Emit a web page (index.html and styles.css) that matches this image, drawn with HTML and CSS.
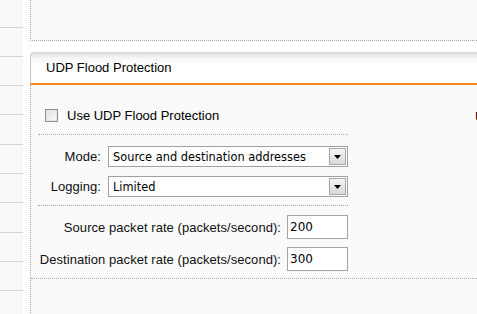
FILE: index.html
```html
<!DOCTYPE html>
<html lang="en">
<head>
  <meta charset="UTF-8">
  <title>UDP Flood Protection</title>
  <link rel="stylesheet" href="styles.css">
</head>
<body>
  <div class="page">
    <ul class="side-nav">
      <li></li><li></li><li></li><li></li><li></li>
      <li></li><li></li><li></li><li></li><li></li>
    </ul>

    <div class="content">
      <div class="box-top"></div>

      <div class="panel">
        <div class="panel-head">UDP Flood Protection</div>
        <div class="panel-body">
          <div class="cols">
            <div class="col-main">
              <label class="check-row">
                <span class="checkbox"></span>
                <span>Use UDP Flood Protection</span>
              </label>

              <div class="group">
                <div class="field">
                  <span class="field-label">Mode:</span>
                  <div class="select">
                    <span class="select-text">Source and destination addresses</span>
                    <span class="select-btn"><svg width="7" height="4" viewBox="0 0 7 4"><path d="M0 0h7L3.5 4z" fill="#000"/></svg></span>
                  </div>
                </div>
                <div class="field">
                  <span class="field-label">Logging:</span>
                  <div class="select">
                    <span class="select-text">Limited</span>
                    <span class="select-btn"><svg width="7" height="4" viewBox="0 0 7 4"><path d="M0 0h7L3.5 4z" fill="#000"/></svg></span>
                  </div>
                </div>
              </div>
            </div>
            <div class="col-side">Use ICMP Flood Protection</div>
          </div>

          <div class="group rates">
            <div class="field">
              <span class="field-label rate-label">Source packet rate (packets/second):</span>
              <input class="text-input" type="text" value="200">
            </div>
            <div class="field">
              <span class="field-label rate-label">Destination packet rate (packets/second):</span>
              <input class="text-input" type="text" value="300">
            </div>
          </div>
        </div>
      </div>
    </div>
  </div>
</body>
</html>
```

FILE: styles.css
```css
/* Reset */
* {
  box-sizing: border-box;
  margin: 0;
  padding: 0;
}

body {
  background-color: #fff;
  font-family: "Liberation Sans", Arial, sans-serif;
  font-size: 13px;
  color: #000;
  overflow: hidden;
}

.page {
  display: flex;
  height: 314px;
}

/* Left navigation strip */
.side-nav {
  list-style: none;
  width: 23px;
  flex: none;
  background-color: #f9f9f9;
}

.side-nav li {
  height: 29.3px;
  border-bottom: 1px solid #d4d4d4;
}

.side-nav li:first-child {
  height: 27.5px;
}

/* Main area */
.content {
  flex: 1;
  margin-left: 7px;
  min-width: 0;
}

.box-top {
  height: 41px;
  background-color: #fafafa;
  border-left: 1px dotted #a8a8a8;
  border-bottom: 1px dotted #a8a8a8;
}

.panel {
  margin-top: 11px;
}

.panel-head {
  height: 33px;
  padding: 7px 0 0 15px;
  border-left: 1px solid #c8c8c8;
  border-top: 1px solid #d8d8d8;
  border-top-left-radius: 4px;
  border-bottom: 2px solid #f28a1a;
  background: linear-gradient(#dedede 0px, #f6f6f6 5px, #fff 12px, #fff 100%);
}

.panel-body {
  background-color: #fafafa;
  border-left: 1px dotted #a8a8a8;
  height: 240px;
  overflow: hidden;
}

.cols {
  display: flex;
}

.col-main {
  width: 317px;
  padding-left: 7px;
  flex: none;
}

.col-side {
  margin-left: 127px;
  padding-top: 24px;
  white-space: nowrap;
}

/* Checkbox row */
.check-row {
  display: flex;
  align-items: center;
  gap: 9px;
  padding: 24px 0 12px 7px;
  border-bottom: 1px dotted #a8a8a8;
  line-height: 13px;
}

.checkbox {
  width: 13px;
  height: 13px;
  border: 1px solid #8e8f8f;
  background: linear-gradient(135deg, #dcdcdc, #fdfdfd);
  box-shadow: inset 0 0 0 1px #e6e6e6;
}

/* Field groups */
.group {
  display: flex;
  flex-direction: column;
  gap: 9px;
  padding: 11px 0 8px;
  border-bottom: 1px dotted #a8a8a8;
}

.field {
  display: flex;
  align-items: center;
  gap: 7px;
}

.field-label {
  width: 63px;
  text-align: right;
  color: #111;
  letter-spacing: 0.05px;
}

.select {
  display: flex;
  align-items: center;
  width: 240px;
  height: 21px;
  border: 1px solid #a0a0a0;
  background-color: #fff;
  padding: 1px;
}

.select-text {
  flex: 1;
  padding-left: 3px;
  font-family: "DejaVu Sans", Tahoma, sans-serif;
  font-size: 11.4px;
  white-space: nowrap;
  overflow: hidden;
}

.select-btn {
  display: flex;
  align-items: center;
  justify-content: center;
  width: 17px;
  height: 17px;
  border: 1px solid #a7a7a7;
  background: linear-gradient(#f6f6f6, #d9d9d9);
}

/* Packet rates */
.rates {
  padding: 9px 0 7px 7px;
  gap: 8px;
}

.rate-label {
  width: 243px;
}

.rates .field {
  gap: 6px;
}

.text-input {
  width: 61px;
  height: 24px;
  border: 1px solid #a5a5a5;
  background-color: #fff;
  padding-left: 2px;
  font-family: "DejaVu Sans", Tahoma, sans-serif;
  font-size: 12px;
  color: #000;
  outline: none;
}
```
